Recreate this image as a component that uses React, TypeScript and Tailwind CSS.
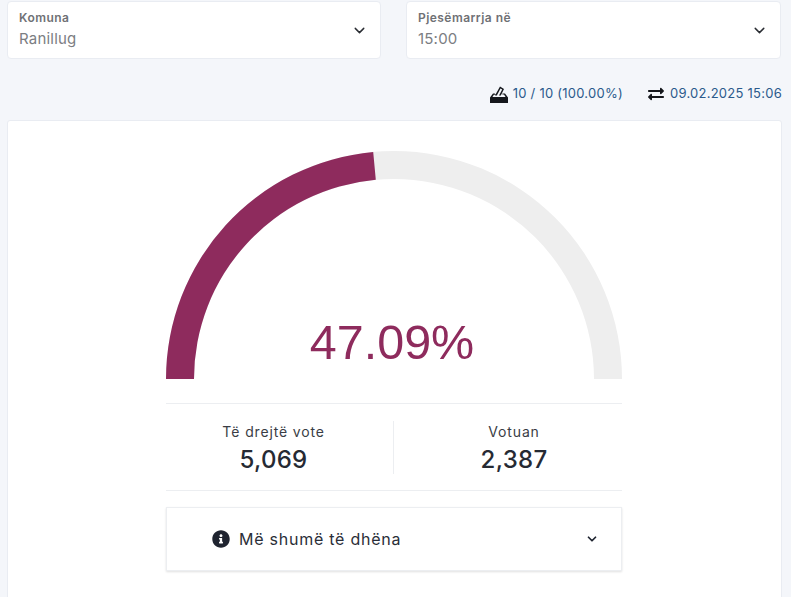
import React from 'react';
import { ChevronDown } from 'lucide-react';
import { FaExchangeAlt } from 'react-icons/fa';

const font = "font-['Inter','Noto_Sans',sans-serif]";

const SelectBox = ({ label, value, className }: { label: string; value: string; className: string }) => (
  <div className={`flex h-[58px] items-center justify-between rounded-[4px] border border-[#e9ecf2] bg-white pl-[11px] pr-[12px] ${className}`}>
    <div className="pb-[2px]">
      <div className="text-[12px] leading-[14px] font-semibold tracking-[0.45px] text-[#6f7175]">{label}</div>
      <div className="mt-[5px] text-[15px] leading-[18px] tracking-[0.2px] text-[#7b7d82]">{value}</div>
    </div>
    <ChevronDown size={17} strokeWidth={2} className="text-[#2a2d33]" />
  </div>
);

const Stat = ({ label, value, divider }: { label: string; value: string; divider?: boolean }) => (
  <div className={`flex h-[53px] w-[240px] flex-col items-center justify-center pt-[4px] ${divider ? 'border-r border-[#eceef1]' : ''}`}>
    <div className="text-[14px] leading-[18px] tracking-[0.85px] text-[#3a3d45]">{label}</div>
    <div className="mt-[4px] text-[24px] leading-[30px] font-medium tracking-[0.3px] text-[#262a33]">{value}</div>
  </div>
);

const App = () => {
  return (
    <div className={`h-[597px] w-[791px] overflow-hidden bg-[#f4f6fa] pl-[7px] pr-[9px] pt-[1px] ${font}`}>
      <div className="mr-[1px] flex gap-[25px]">
        <SelectBox label="Komuna" value="Ranillug" className="w-[374px]" />
        <SelectBox label="Pjesëmarrja në" value="15:00" className="flex-1" />
      </div>

      <div className="mt-[24px] flex h-[22px] items-center justify-end gap-[25px] text-[13px] tracking-[0.25px] text-[#2b5a8c]">
        <div className="flex items-center gap-[5px]">
          <svg width="18" height="17" viewBox="0 0 18 17" fill="#15171c">
            <path d="M0 17v-5.5L3 7.5h1.6L6.2 8.8H3.8L2.4 11h13.2L14 8.6h-1.6V7.5H15l3 4V17z" />
            <path d="M5 9.6 10 .6l4 2.4-3.2 6.6H9l3.2-6L10.5 2.6 6.8 9.6z" />
          </svg>
          <span>10 / 10 (100.00%)</span>
        </div>
        <div className="flex items-center gap-[6px]">
          <FaExchangeAlt size={16} className="text-[#15171c]" />
          <span>09.02.2025 15:06</span>
        </div>
      </div>

      <div className="mt-[15px] h-[500px] rounded-t-[3px] border border-[#e9ecf2] bg-white pt-[30px]">
        <div className="ml-[158px] w-[456px]">
          <div className="relative h-[229px]">
            <svg width="456" height="229" viewBox="0 0 456 229">
              <path d="M0 228A228 228 0 0 1 456 228H428A200 200 0 0 0 28 228Z" fill="#eeeeee" />
              <path d="M0 228A228 228 0 0 1 207.2 1L209.8 28.8A200 200 0 0 0 28 228Z" fill="#8e2b5d" />
            </svg>
            <div className="absolute inset-x-0 top-[158px] pr-[4px] text-center font-['Liberation_Sans',sans-serif] text-[48.5px] leading-[66px] text-[#8e2b5d]">
              47.09%
            </div>
          </div>

          <div className="mt-[23px] flex h-[88px] items-center justify-center border-y border-[#eceef1]">
            <div className="-mx-[12px] flex shrink-0">
              <Stat label="Të drejtë vote" value="5,069" divider />
              <Stat label="Votuan" value="2,387" />
            </div>
          </div>

          <div className="mt-[16px] flex h-[64px] items-center justify-between border border-[#eceef1] pl-[45px] pr-[22px] shadow-[0_1px_2px_rgba(0,0,0,0.12)]">
            <div className="flex items-center gap-[9px]">
              <svg width="18" height="18" viewBox="0 0 512 512" fill="#1f2430">
                <path d="M256 8C119 8 8 119 8 256s111 248 248 248 248-111 248-248S393 8 256 8zm0 110c23 0 42 19 42 42s-19 42-42 42-42-19-42-42 19-42 42-42zm56 254c0 7-5 12-12 12h-88c-7 0-12-5-12-12v-24c0-7 5-12 12-12h12v-64h-12c-7 0-12-5-12-12v-24c0-7 5-12 12-12h64c7 0 12 5 12 12v100h12c7 0 12 5 12 12v24z" />
              </svg>
              <span className="text-[16px] tracking-[0.75px] text-[#2a2e38]">Më shumë të dhëna</span>
            </div>
            <ChevronDown size={14} strokeWidth={3} className="text-[#1f2430]" />
          </div>
        </div>
      </div>
    </div>
  );
};

export default App;
